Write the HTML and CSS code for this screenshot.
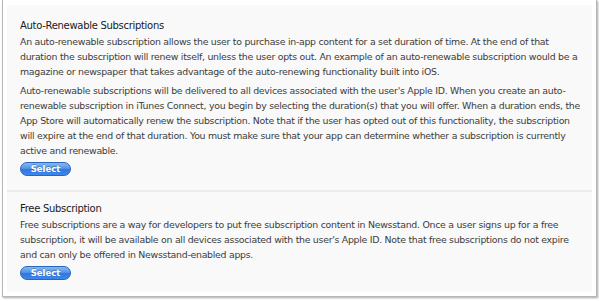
FILE: index.html
```html
<!DOCTYPE html>
<html>
<head>
<meta charset="utf-8">
<link rel="stylesheet" href="styles.css">
</head>
<body>
<div class="frame">
  <div class="panel">
    <section class="option">
      <h2 class="title">Auto-Renewable Subscriptions</h2>
      <p class="text">An auto-renewable subscription allows the user to purchase in-app content for a set duration of time. At the end of that<br>duration the subscription will renew itself, unless the user opts out. An example of an auto-renewable subscription would be a<br>magazine or newspaper that takes advantage of the auto-renewing functionality built into iOS.</p>
      <p class="text">Auto-renewable subscriptions will be delivered to all devices associated with the user's Apple ID. When you create an auto-<br>renewable subscription in iTunes Connect, you begin by selecting the duration(s) that you will offer. When a duration ends, the<br>App Store will automatically renew the subscription. Note that if the user has opted out of this functionality, the subscription<br>will expire at the end of that duration. You must make sure that your app can determine whether a subscription is currently<br>active and renewable.</p>
      <button class="select">Select</button>
    </section>
    <section class="option">
      <h2 class="title">Free Subscription</h2>
      <p class="text">Free subscriptions are a way for developers to put free subscription content in Newsstand. Once a user signs up for a free<br>subscription, it will be available on all devices associated with the user's Apple ID. Note that free subscriptions do not expire<br>and can only be offered in Newsstand-enabled apps.</p>
      <button class="select">Select</button>
    </section>
  </div>
</div>
</body>
</html>
```

FILE: styles.css
```css
html, body {
  margin: 0;
  padding: 0;
  background: #ffffff;
}
body {
  width: 599px;
  height: 301px;
  overflow: hidden;
  font-family: "DejaVu Sans", "Liberation Sans", sans-serif;
}
.frame {
  margin-left: 2px;
  width: 585px;
  height: 287px;
  border: 1px solid #b8b8b8;
  border-top: none;
  padding: 5px 4px 4px 4px;
  background: #ffffff;
  box-shadow: 1px 1px 2px rgba(0, 0, 0, 0.35);
}
.panel {
  height: 100%;
  background: #f9f9f9;
}
.option {
  padding: 13px 0 14px 13px;
}
.option + .option {
  border-top: 2px solid #ececec;
  padding-top: 9px;
}
.title {
  margin: 0;
  font-size: 10px;
  line-height: 16px;
  font-weight: normal;
  letter-spacing: -0.3px;
  color: #1a1a1a;
}
.text {
  margin: 0 0 4px 0;
  font-size: 9.4px;
  line-height: 15px;
  color: #3c3c3c;
  white-space: nowrap;
  letter-spacing: -0.28px;
}
.select {
  display: block;
  margin-top: 2px;
  width: 51px;
  height: 14px;
  padding: 0;
  border: 1px solid #2b66bd;
  border-radius: 8px;
  background: linear-gradient(#86b9f3 0%, #5393e7 45%, #3276df 55%, #3d88ec 100%);
  color: #ffffff;
  font-family: "DejaVu Sans", sans-serif;
  font-size: 8.5px;
  font-weight: bold;
  line-height: 12px;
  text-shadow: 0 -1px 0 rgba(0, 0, 0, 0.25);
}
```
